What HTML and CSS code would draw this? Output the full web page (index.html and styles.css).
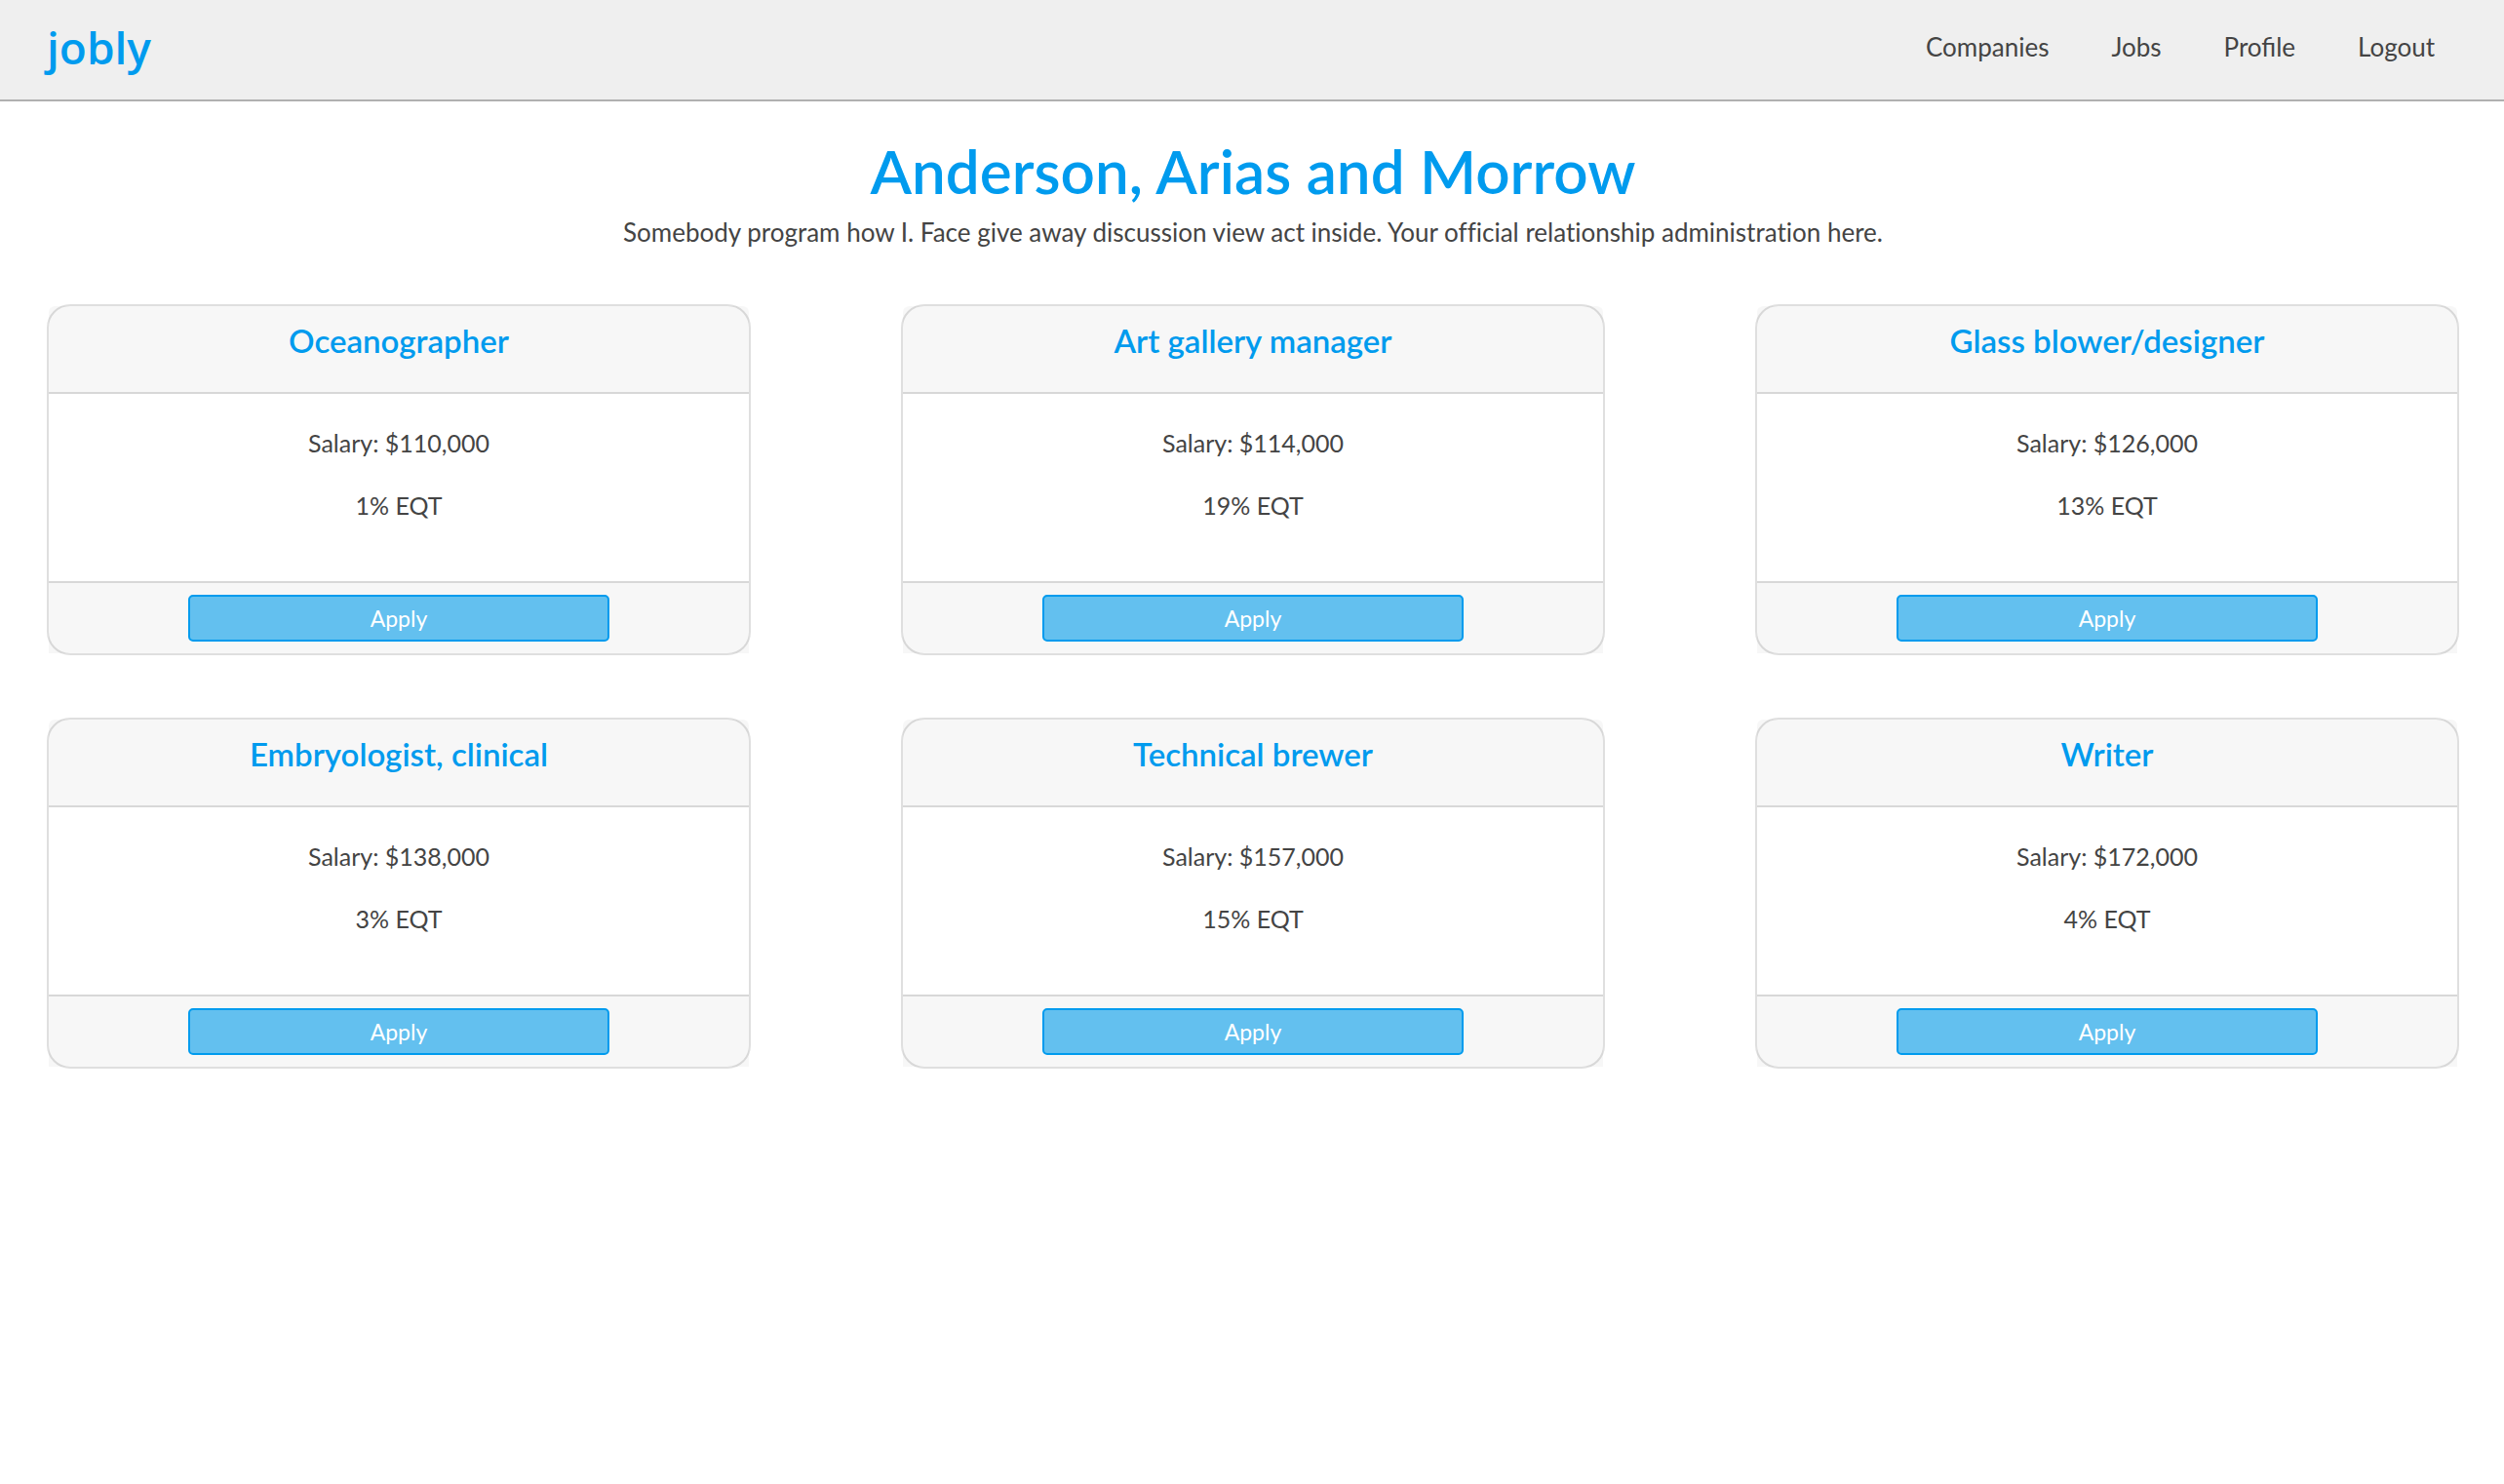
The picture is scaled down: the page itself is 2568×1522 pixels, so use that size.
FILE: index.html
```html
<!DOCTYPE html>
<html lang="en">
<head>
<meta charset="utf-8">
<meta name="viewport" content="width=device-width, initial-scale=1">
<title>Jobly</title>
<link rel="stylesheet" href="styles.css">
</head>
<body>
<header class="navbar">
  <a class="brand" href="#">jobly</a>
  <nav class="nav-links">
    <a href="#">Companies</a>
    <a href="#">Jobs</a>
    <a href="#">Profile</a>
    <a href="#">Logout</a>
  </nav>
</header>
<main class="company">
  <h1 class="company-name">Anderson, Arias and Morrow</h1>
  <p class="company-about">Somebody program how I. Face give away discussion view act inside. Your official relationship administration here.</p>
  <section class="jobs">
    <article class="card">
      <div class="card-header"><h2>Oceanographer</h2></div>
      <div class="card-body"><p>Salary: $110,000</p><p>1% EQT</p></div>
      <div class="card-footer"><button type="button">Apply</button></div>
    </article>
    <article class="card">
      <div class="card-header"><h2>Art gallery manager</h2></div>
      <div class="card-body"><p>Salary: $114,000</p><p>19% EQT</p></div>
      <div class="card-footer"><button type="button">Apply</button></div>
    </article>
    <article class="card">
      <div class="card-header"><h2>Glass blower/designer</h2></div>
      <div class="card-body"><p>Salary: $126,000</p><p>13% EQT</p></div>
      <div class="card-footer"><button type="button">Apply</button></div>
    </article>
    <article class="card">
      <div class="card-header"><h2>Embryologist, clinical</h2></div>
      <div class="card-body"><p>Salary: $138,000</p><p>3% EQT</p></div>
      <div class="card-footer"><button type="button">Apply</button></div>
    </article>
    <article class="card">
      <div class="card-header"><h2>Technical brewer</h2></div>
      <div class="card-body"><p>Salary: $157,000</p><p>15% EQT</p></div>
      <div class="card-footer"><button type="button">Apply</button></div>
    </article>
    <article class="card">
      <div class="card-header"><h2>Writer</h2></div>
      <div class="card-body"><p>Salary: $172,000</p><p>4% EQT</p></div>
      <div class="card-footer"><button type="button">Apply</button></div>
    </article>
  </section>
</main>
</body>
</html>
```
FILE: styles.css
```css
* {
  box-sizing: border-box;
}

body {
  margin: 0;
  background: #fff;
  color: #444;
  font-family: Lato, "Open Sans", sans-serif;
  font-size: 26px;
  line-height: 40px;
}

h1, h2, p {
  margin: 0;
}

.navbar {
  display: flex;
  align-items: center;
  justify-content: space-between;
  padding: 18px 71px 24px 48px;
  background: #efefef;
  border-bottom: 2px solid #b0b0b0;
}

.brand {
  color: #009bee;
  font-family: "Open Sans", sans-serif;
  font-size: 46px;
  font-weight: 600;
  line-height: 60px;
  text-decoration: none;
}

.nav-links {
  display: flex;
  gap: 64px;
}

.nav-links a {
  color: inherit;
  text-decoration: none;
}

.company {
  padding: 32px 46px 32px 48px;
  text-align: center;
}

.company-name {
  margin-bottom: 4px;
  color: #009bee;
  font-size: 62px;
  font-weight: 600;
  line-height: 78px;
}

.company-about {
  font-variant-ligatures: none;
}

.jobs {
  display: grid;
  grid-template-columns: repeat(3, 1fr);
  gap: 64px 154px;
  margin-top: 54px;
}

.card {
  border: 2px solid rgba(0, 0, 0, 0.125);
  border-radius: 24px;
}

.card-header {
  padding: 16px 32px 34px;
  background: rgba(0, 0, 0, 0.03);
  border-bottom: 2px solid rgba(0, 0, 0, 0.125);
  border-radius: 6px 6px 0 0;
}

.card-header h2 {
  color: #009bee;
  font-size: 33px;
  font-weight: 600;
  line-height: 38px;
}

.card-body {
  display: flex;
  flex-direction: column;
  gap: 24px;
  padding: 30px 32px 58px;
  font-size: 25px;
}

.card-footer {
  padding: 12px 32px;
  background: rgba(0, 0, 0, 0.03);
  border-top: 2px solid rgba(0, 0, 0, 0.125);
}

.card-footer button {
  display: block;
  width: 66%;
  height: 48px;
  margin: 0 auto;
  padding: 0;
  border: 2px solid #009bee;
  border-radius: 5px;
  background: #63c0ef;
  color: #fff;
  font-family: inherit;
  font-size: 23px;
}
```
